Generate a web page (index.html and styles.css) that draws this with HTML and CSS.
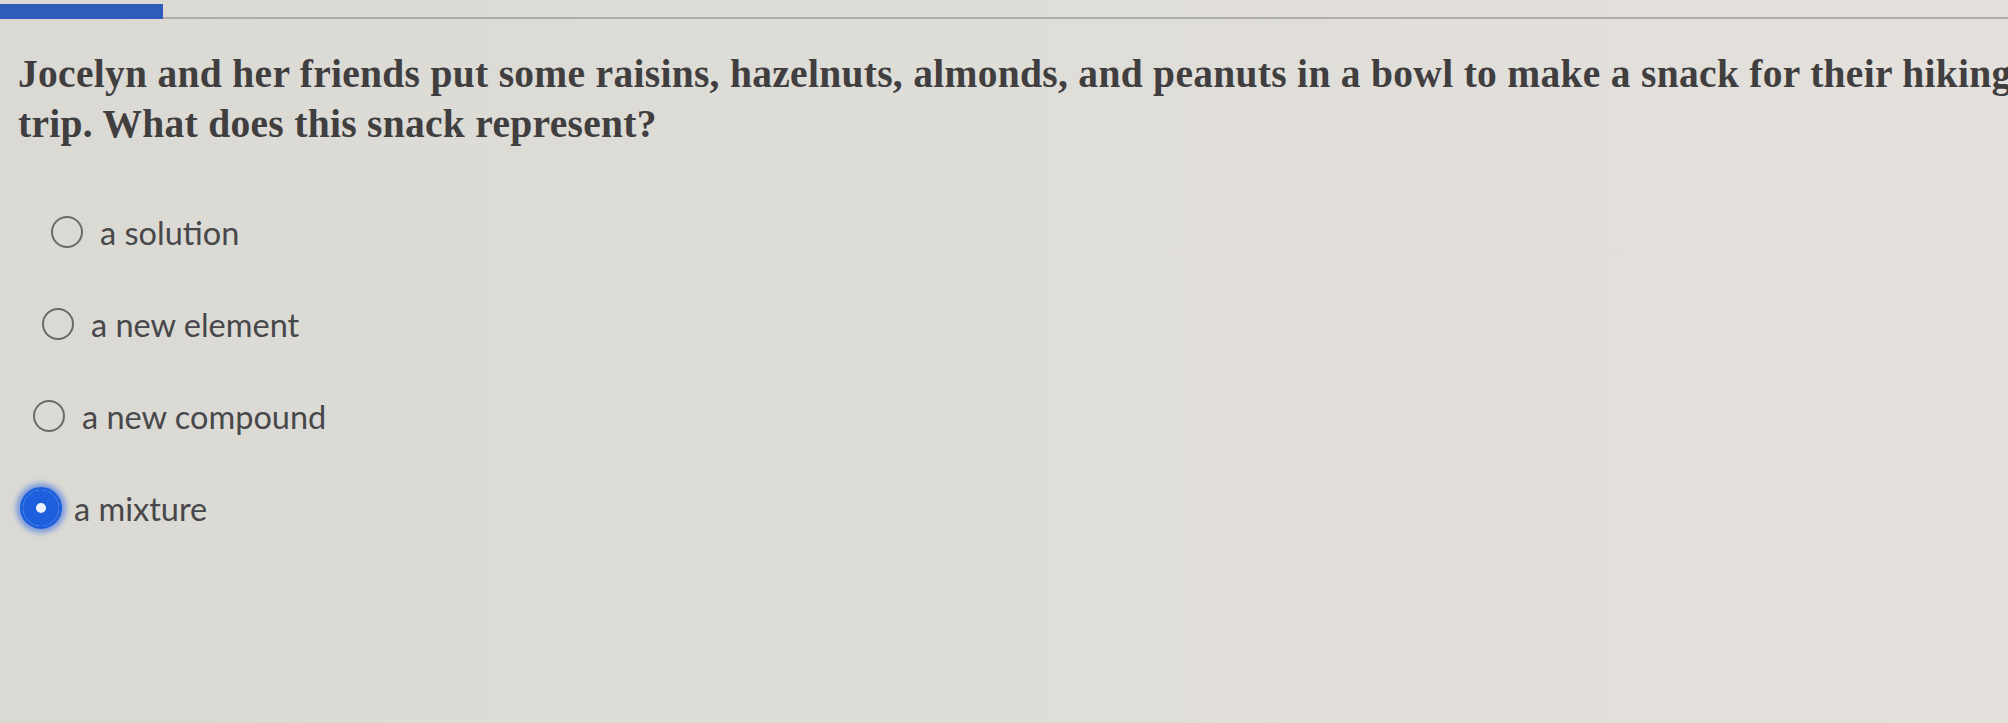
FILE: index.html
```html
<!DOCTYPE html>
<html>
<head>
<meta charset="utf-8">
<link rel="stylesheet" href="styles.css">
</head>
<body>
<div class="page">
  <div class="topbar">
    <div class="progress"></div>
    <div class="rule"></div>
  </div>
  <p class="question">Jocelyn and her friends put some raisins, hazelnuts, almonds, and peanuts in a bowl to make a snack for their hiking trip. What does this snack represent?</p>
  <div class="options">
    <label class="option o1"><span class="radio"></span><span class="text">a solution</span></label>
    <label class="option o2"><span class="radio"></span><span class="text">a new element</span></label>
    <label class="option o3"><span class="radio"></span><span class="text">a new compound</span></label>
    <label class="option o4"><span class="radio checked"></span><span class="text">a mixture</span></label>
  </div>
</div>
</body>
</html>
```
FILE: styles.css
```css
html, body {
  margin: 0;
  padding: 0;
  overflow: hidden;
}
body {
  width: 2008px;
  height: 723px;
  background: linear-gradient(90deg, #dad9d4 0%, #dfddd8 50%, #e4e1dd 100%);
}
.page {
  width: 2008px;
  height: 723px;
  overflow: hidden;
}
.topbar {
  display: flex;
  align-items: flex-end;
  padding-top: 4px;
}
.progress {
  width: 163px;
  height: 15px;
  background: #2f5cb8;
}
.rule {
  flex: 1;
  height: 0;
  border-bottom: 2px solid #aeadaa;
}
.question {
  width: 2040px;
  margin: 30px 0 0 18px;
  font-family: "Liberation Serif", "Times New Roman", serif;
  font-weight: bold;
  font-size: 39.5px;
  letter-spacing: 0.3px;
  line-height: 50px;
  color: #403e3f;
}
.options {
  display: flex;
  flex-direction: column;
  margin-top: 37px;
}
.option {
  display: flex;
  align-items: center;
  height: 92px;
  font-family: Lato, "Open Sans", sans-serif;
  font-size: 32.5px;
  color: #48474a;
}
.o1 { padding-left: 51px; }
.o2 { padding-left: 42px; }
.o3 { padding-left: 33px; }
.o4 { padding-left: 20px; }
.radio {
  width: 28px;
  height: 28px;
  border: 2.5px solid #6a6a6a;
  border-radius: 50%;
  margin-right: 17px;
  flex: none;
}
.radio.checked {
  width: 36px;
  height: 36px;
  border: 3px solid #1d5fdc;
  background: #eef2fb;
  box-shadow: inset 0 0 0 13px #1d5fdc, 0 0 5px 4px rgba(50, 105, 225, 0.55);
  margin-right: 12px;
}
.text {
  white-space: nowrap;
}
```
